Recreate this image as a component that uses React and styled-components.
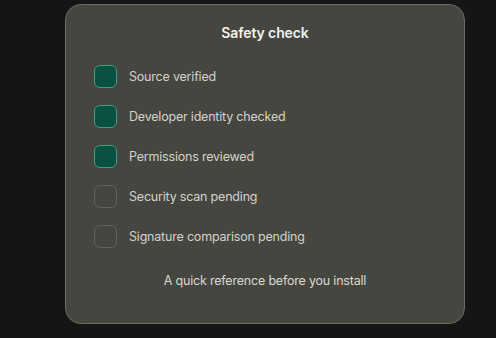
import React from 'react'
import styled, { createGlobalStyle } from 'styled-components'

const GlobalStyle = createGlobalStyle`
  html, body {
    margin: 0;
    background: #151515;
  }
  body {
    font-family: Inter, "Noto Sans", sans-serif;
  }
`

const Page = styled.div`
  width: 496px;
  height: 338px;
  padding: 4px 0 0 65px;
  box-sizing: border-box;
  display: flex;
`

const Card = styled.section`
  width: 400px;
  height: 320px;
  box-sizing: border-box;
  background: #464641;
  border: 1px solid #6c6c66;
  border-radius: 16px;
  padding: 18px 28px 0 28px;
  display: flex;
  flex-direction: column;
`

const Title = styled.h2`
  margin: 0;
  text-align: center;
  color: #f2f2ee;
  font-size: 14px;
  font-weight: 600;
  line-height: 20px;
  letter-spacing: -0.1px;
`

const List = styled.ul`
  list-style: none;
  margin: 22px 0 0 0;
  padding: 0;
  display: flex;
  flex-direction: column;
  gap: 17px;
`

const Row = styled.li`
  display: flex;
  align-items: center;
  gap: 12px;
  height: 23px;
`

const Box = styled.span`
  width: 23px;
  height: 23px;
  box-sizing: border-box;
  border-radius: 6px;
  border: 1.5px solid ${({ checked }) => (checked ? '#3f9b84' : '#62625d')};
  background: ${({ checked }) => (checked ? '#0b5141' : 'transparent')};
`

const Label = styled.span`
  color: #d2d2ca;
  font-size: 12.5px;
  letter-spacing: -0.2px;
`

const Footer = styled.p`
  margin: 25px 0 0 0;
  text-align: center;
  color: #d8d8d0;
  font-size: 12.5px;
  letter-spacing: -0.2px;
`

const items = [
  { label: 'Source verified', checked: true },
  { label: 'Developer identity checked', checked: true },
  { label: 'Permissions reviewed', checked: true },
  { label: 'Security scan pending', checked: false },
  { label: 'Signature comparison pending', checked: false }
]

export default function App() {
  return (
    <Page>
      <GlobalStyle />
      <Card>
        <Title>Safety check</Title>
        <List>
          {items.map(item => (
            <Row key={item.label}>
              <Box checked={item.checked} />
              <Label>{item.label}</Label>
            </Row>
          ))}
        </List>
        <Footer>A quick reference before you install</Footer>
      </Card>
    </Page>
  )
}
